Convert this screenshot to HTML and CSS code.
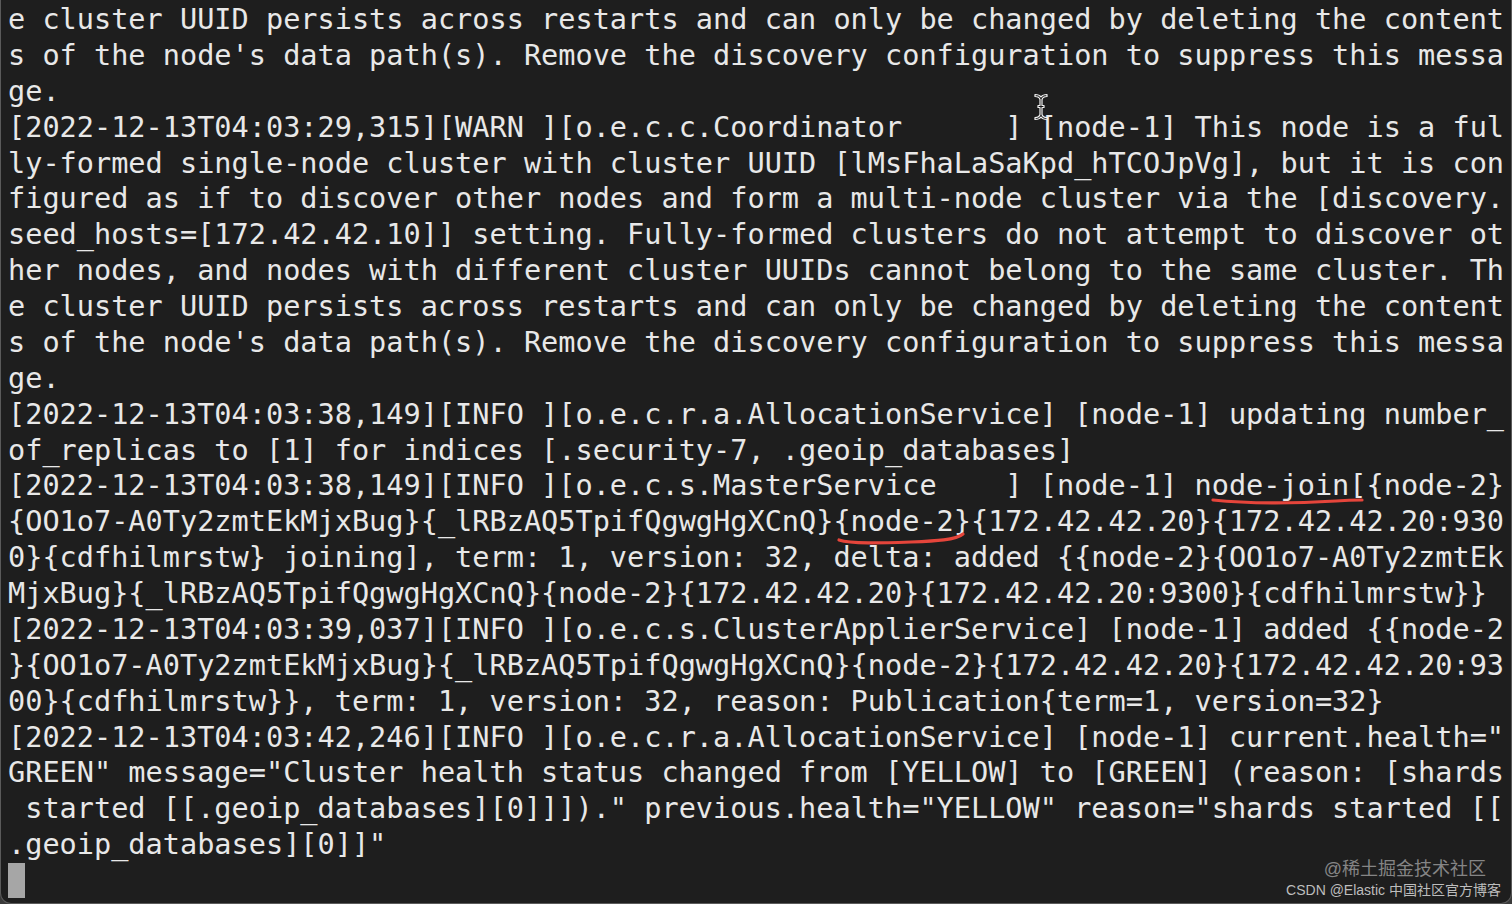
FILE: index.html
```html
<!DOCTYPE html>
<html lang="en">
<head>
<meta charset="utf-8">
<title>Terminal</title>
<link rel="stylesheet" href="styles.css">
</head>
<body>
<div class="window">
<pre class="log">e cluster UUID persists across restarts and can only be changed by deleting the content
s of the node's data path(s). Remove the discovery configuration to suppress this messa
ge.
[2022-12-13T04:03:29,315][WARN ][o.e.c.c.Coordinator      ] [node-1] This node is a ful
ly-formed single-node cluster with cluster UUID [lMsFhaLaSaKpd_hTCOJpVg], but it is con
figured as if to discover other nodes and form a multi-node cluster via the [discovery.
seed_hosts=[172.42.42.10]] setting. Fully-formed clusters do not attempt to discover ot
her nodes, and nodes with different cluster UUIDs cannot belong to the same cluster. Th
e cluster UUID persists across restarts and can only be changed by deleting the content
s of the node's data path(s). Remove the discovery configuration to suppress this messa
ge.
[2022-12-13T04:03:38,149][INFO ][o.e.c.r.a.AllocationService] [node-1] updating number_
of_replicas to [1] for indices [.security-7, .geoip_databases]
[2022-12-13T04:03:38,149][INFO ][o.e.c.s.MasterService    ] [node-1] node-join[{node-2}
{OO1o7-A0Ty2zmtEkMjxBug}{_lRBzAQ5TpifQgwgHgXCnQ}{node-2}{172.42.42.20}{172.42.42.20:930
0}{cdfhilmrstw} joining], term: 1, version: 32, delta: added {{node-2}{OO1o7-A0Ty2zmtEk
MjxBug}{_lRBzAQ5TpifQgwgHgXCnQ}{node-2}{172.42.42.20}{172.42.42.20:9300}{cdfhilmrstw}}
[2022-12-13T04:03:39,037][INFO ][o.e.c.s.ClusterApplierService] [node-1] added {{node-2
}{OO1o7-A0Ty2zmtEkMjxBug}{_lRBzAQ5TpifQgwgHgXCnQ}{node-2}{172.42.42.20}{172.42.42.20:93
00}{cdfhilmrstw}}, term: 1, version: 32, reason: Publication{term=1, version=32}
[2022-12-13T04:03:42,246][INFO ][o.e.c.r.a.AllocationService] [node-1] current.health="
GREEN" message="Cluster health status changed from [YELLOW] to [GREEN] (reason: [shards
 started [[.geoip_databases][0]]])." previous.health="YELLOW" reason="shards started [[
.geoip_databases][0]]"
<span class="cursor"> </span></pre>

<svg class="marks" width="1512" height="904" viewBox="0 0 1512 904">
  <path d="M1212 500 C1250 504 1300 503 1335 501 C1348 500 1356 500 1361 500" fill="none" stroke="#e5453b" stroke-width="3.2" stroke-linecap="round"/>
  <path d="M838 540 C850 544 880 543 910 542 C935 541 955 540 962 534" fill="none" stroke="#e5453b" stroke-width="3.2" stroke-linecap="round"/>
</svg>

<svg class="ibeam" width="16" height="28" viewBox="0 0 16 28">
  <path d="M2 1.5 C5 1.5 7 2.5 8 4 C9 2.5 11 1.5 14 1.5 L14 3.5 C11.5 3.5 9.5 4.5 9 6.5 L9 12.5 L11 12.5 L11 14.5 L9 14.5 L9 21.5 C9.5 23.5 11.5 24.5 14 24.5 L14 26.5 C11 26.5 9 25.5 8 24 C7 25.5 5 26.5 2 26.5 L2 24.5 C4.5 24.5 6.5 23.5 7 21.5 L7 14.5 L5 14.5 L5 12.5 L7 12.5 L7 6.5 C6.5 4.5 4.5 3.5 2 3.5 Z" fill="#111" stroke="#f2f2f2" stroke-width="1.2" stroke-linejoin="round"/>
</svg>

<div class="watermark">
  <div class="wm-top">@稀土掘金技术社区</div>
  <div class="wm-bottom">CSDN @Elastic 中国社区官方博客</div>
</div>
</div>
</body>
</html>
```
FILE: styles.css
```css
html, body {
  margin: 0;
  padding: 0;
  background: #3a3a3a;
}

.window {
  position: relative;
  width: 1512px;
  height: 904px;
  box-sizing: border-box;
  background: #1e1e1e;
  border-left: 1px solid #5a5a5a;
  border-right: 1px solid #5a5a5a;
  border-bottom: 1px solid #5a5a5a;
  border-radius: 0 0 11px 11px;
  overflow: hidden;
}

.log {
  margin: 0;
  padding: 2px 0 0 7px;
  font-family: "DejaVu Sans Mono", "Liberation Mono", monospace;
  font-size: 28.57px;
  line-height: 35.87px;
  color: #e8e8e8;
  white-space: pre;
}

.cursor {
  display: inline-block;
  width: 17px;
  height: 35px;
  vertical-align: top;
  background: #a6a6a6;
}

.marks {
  position: absolute;
  left: 0;
  top: 0;
  pointer-events: none;
}

.ibeam {
  position: absolute;
  left: 1032px;
  top: 93px;
}

.watermark {
  position: absolute;
  right: 10px;
  bottom: 5px;
  display: flex;
  flex-direction: column;
  align-items: flex-end;
  font-family: "Liberation Sans", "Noto Sans CJK SC", sans-serif;
  line-height: 1.15;
}

.wm-top {
  font-size: 18px;
  color: #858585;
  margin-right: 15px;
  margin-bottom: 2px;
}

.wm-bottom {
  font-size: 14px;
  color: #bdbdbd;
}
```
